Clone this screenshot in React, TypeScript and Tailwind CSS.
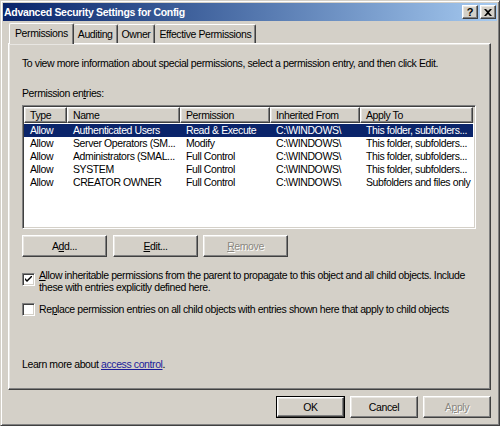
import React from "react";

const raised =
  "border border-t-white border-l-white border-r-[#404040] border-b-[#404040] shadow-[inset_-1px_-1px_#808080,inset_1px_1px_#e8e6e2]";
const sunken =
  "border border-t-[#808080] border-l-[#808080] border-r-white border-b-white shadow-[inset_1px_1px_#404040,inset_-1px_-1px_#d4d0c8]";

const rows = [
  ["Allow", "Authenticated Users", "Read & Execute", "C:\\WINDOWS\\", "This folder, subfolders..."],
  ["Allow", "Server Operators (SM...", "Modify", "C:\\WINDOWS\\", "This folder, subfolders..."],
  ["Allow", "Administrators (SMAL...", "Full Control", "C:\\WINDOWS\\", "This folder, subfolders..."],
  ["Allow", "SYSTEM", "Full Control", "C:\\WINDOWS\\", "This folder, subfolders..."],
  ["Allow", "CREATOR OWNER", "Full Control", "C:\\WINDOWS\\", "Subfolders and files only"],
];

const cols = [
  { label: "Type", w: "w-[43px]" },
  { label: "Name", w: "w-[113px]" },
  { label: "Permission", w: "w-[90px]" },
  { label: "Inherited From", w: "w-[90px]" },
  { label: "Apply To", w: "w-[113px]" },
];

function Btn({
  children,
  className = "",
  disabled = false,
  def = false,
}: {
  children: React.ReactNode;
  className?: string;
  disabled?: boolean;
  def?: boolean;
}) {
  const inner = (
    <div
      className={`${raised} h-full w-full flex items-center justify-center ${
        disabled ? "text-[#8a8780] [text-shadow:1px_1px_0_#ffffff]" : "text-black"
      }`}
    >
      {children}
    </div>
  );
  if (def) {
    return <div className={`border border-black ${className}`}>{inner}</div>;
  }
  return <div className={className}>{inner}</div>;
}

function Checkbox({ checked }: { checked: boolean }) {
  return (
    <div className={`${sunken} w-[13px] h-[13px] bg-white shrink-0 flex items-center justify-center`}>
      {checked && (
        <svg width="7" height="7" viewBox="0 0 7 7">
          <path d="M0 2 L0 4 L2 6 L7 1 L7 -1 L2 4 Z" fill="black" />
        </svg>
      )}
    </div>
  );
}

const tab =
  "h-[19px] px-[4px] flex items-center border-t border-t-white border-r border-r-[#404040] shadow-[inset_-1px_0_#808080] rounded-t-[2px]";

export default function App() {
  return (
    <div className="w-[500px] h-[426px] bg-[#d4d0c8] text-[10.5px] tracking-[-0.4px] leading-[13px] text-black font-['Liberation_Sans',Arial,sans-serif] border border-t-[#d4d0c8] border-l-[#d4d0c8] border-r-[#404040] border-b-[#404040] shadow-[inset_1px_1px_white,inset_-1px_-1px_#808080] p-[2px] flex flex-col overflow-hidden">
      {/* title bar */}
      <div className="h-[18px] shrink-0 flex items-center justify-between pl-[1px] pr-[1px] bg-gradient-to-r from-[#0a246a] to-[#a6caf0]">
        <span className="text-white font-bold text-[10.5px] tracking-[-0.3px]">
          Advanced Security Settings for Config
        </span>
        <div className="flex gap-[2px]">
          <div className={`${raised} bg-[#d4d0c8] w-[16px] h-[14px] flex items-center justify-center font-bold text-[11px] leading-none tracking-normal`}>
            ?
          </div>
          <div className={`${raised} bg-[#d4d0c8] w-[16px] h-[14px] flex items-center justify-center`}>
            <svg width="8" height="7" viewBox="0 0 8 7">
              <path d="M0 0 L2 0 L4 2 L6 0 L8 0 L5 3.5 L8 7 L6 7 L4 5 L2 7 L0 7 L3 3.5 Z" fill="black" />
            </svg>
          </div>
        </div>
      </div>

      {/* tabs */}
      <div className="flex items-end h-[22px] pl-[6px] relative z-10">
        <div className="h-[21px] px-[5px] flex items-center border-t border-l border-t-white border-l-white border-r border-r-[#404040] shadow-[inset_-1px_0_#808080] rounded-t-[2px] bg-[#d4d0c8] -mb-[1px] pb-[2px]">
          Permissions
        </div>
        <div className={tab}>Auditing</div>
        <div className={tab}>Owner</div>
        <div className={tab}>Effective Permissions</div>
      </div>

      {/* panel */}
      <div className={`${raised} ml-[5px] mr-[6px] h-[347px] shrink-0 pl-[13px] pr-[10px] pt-[13px] flex flex-col`}>
        <p className="whitespace-nowrap">
          To view more information about special permissions, select a permission entry, and then click Edit.
        </p>
        <p className="mt-[17px]">
          Permission en<u>t</u>ries:
        </p>
        <div className={`${sunken} mt-[5px] w-[454px] h-[124px] bg-white p-[1px] flex flex-col`}>
          <div className="flex h-[16px] bg-[#d4d0c8]">
            {cols.map((c) => (
              <div key={c.label} className={`${c.w} ${raised} px-[5px] flex items-center whitespace-nowrap`}>
                {c.label}
              </div>
            ))}
          </div>
          <div className="flex flex-col pt-[1px]">
            {rows.map((r, i) => (
              <div key={i} className="flex h-[13px]">
                {r.map((cell, j) => (
                  <div
                    key={j}
                    className={`${cols[j].w} pl-[6px] flex items-center whitespace-nowrap overflow-hidden ${
                      i === 0 ? "bg-[#0a246a] text-white" : ""
                    }`}
                  >
                    {cell}
                  </div>
                ))}
              </div>
            ))}
          </div>
        </div>

        <div className="flex mt-[6px] h-[22px]">
          <Btn className="w-[85px]">
            A<u>d</u>d...
          </Btn>
          <Btn className="w-[85px] ml-[6px]">
            <u>E</u>dit...
          </Btn>
          <Btn className="w-[85px] ml-[5px]" disabled>
            <u>R</u>emove
          </Btn>
        </div>

        <div className="flex gap-[4px] mt-[11px]">
          <div className="pt-[5px]">
            <Checkbox checked />
          </div>
          <p className="leading-[12px] pt-[1px]">
            <u>A</u>llow inheritable permissions from the parent to propagate to this object and all child objects. Include
            <br />
            these with entries explicitly defined here.
          </p>
        </div>

        <div className="flex gap-[4px] mt-[10px] items-center">
          <Checkbox checked={false} />
          <p className="whitespace-nowrap">
            Re<u>p</u>lace permission entries on all child objects with entries shown here that apply to child objects
          </p>
        </div>

        <p className="mt-[42px]">
          Learn more about <span className="text-[#1c1c9a] underline">access control</span>.
        </p>
      </div>

      {/* bottom buttons */}
      <div className="flex justify-end gap-[5px] mt-[6px] mr-[6px] h-[22px]">
        <Btn className="w-[69px]" def>
          OK
        </Btn>
        <Btn className="w-[68px]">Cancel</Btn>
        <Btn className="w-[68px]" disabled>
          A<u>p</u>ply
        </Btn>
      </div>
    </div>
  );
}
